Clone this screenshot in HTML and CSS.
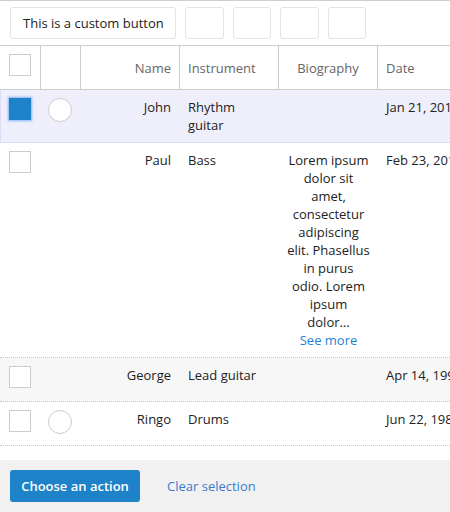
FILE: index.html
```html
<!DOCTYPE html>
<html lang="en">
<head>
<meta charset="utf-8">
<title>Table</title>
<link rel="stylesheet" href="styles.css">
</head>
<body>
<div class="page">
  <div class="toolbar">
    <button class="tbtn tbtn-text">This is a custom button</button>
    <button class="tbtn tbtn-empty"></button>
    <button class="tbtn tbtn-empty"></button>
    <button class="tbtn tbtn-empty"></button>
    <button class="tbtn tbtn-empty"></button>
  </div>

  <div class="grid">
    <div class="row head">
      <div class="hc hc-check"><span class="box"></span></div>
      <div class="hc"></div>
      <div class="hc right">Name</div>
      <div class="hc">Instrument</div>
      <div class="hc center">Biography</div>
      <div class="hc">Date</div>
    </div>

    <div class="row body selected">
      <div class="c c-check"><span class="box checked"></span></div>
      <div class="c c-radio"><span class="radio"></span></div>
      <div class="c right">John</div>
      <div class="c">Rhythm guitar</div>
      <div class="c center"></div>
      <div class="c nowrap">Jan 21, 2018</div>
    </div>

    <div class="row body dotted">
      <div class="c c-check"><span class="box"></span></div>
      <div class="c c-radio"></div>
      <div class="c right">Paul</div>
      <div class="c">Bass</div>
      <div class="c center bio">Lorem ipsum dolor sit amet, consectetur adipiscing elit. Phasellus in purus odio. Lorem ipsum dolor…<a class="more" href="#">See more</a></div>
      <div class="c nowrap">Feb 23, 2017</div>
    </div>

    <div class="row body dotted grey">
      <div class="c c-check"><span class="box"></span></div>
      <div class="c c-radio"></div>
      <div class="c right">George</div>
      <div class="c">Lead guitar</div>
      <div class="c center"></div>
      <div class="c nowrap">Apr 14, 1990</div>
    </div>

    <div class="row body dotted">
      <div class="c c-check"><span class="box"></span></div>
      <div class="c c-radio"><span class="radio"></span></div>
      <div class="c right">Ringo</div>
      <div class="c">Drums</div>
      <div class="c center"></div>
      <div class="c nowrap">Jun 22, 1985</div>
    </div>
  </div>

  <div class="footer">
    <button class="action">Choose an action</button>
    <a class="clear" href="#">Clear selection</a>
  </div>
</div>
</body>
</html>
```

FILE: styles.css
```css
html, body {
  margin: 0;
  padding: 0;
  overflow: hidden;
  background: #fff;
}

body {
  font-family: "Open Sans", "DejaVu Sans", sans-serif;
  font-size: 13px;
  line-height: 18px;
  color: #222;
}

.page {
  width: 450px;
  border-top: 1px solid #cfcfcf;
}

.toolbar {
  display: flex;
  gap: 9px;
  padding: 6px 10px 6px 10px;
}

.tbtn {
  box-sizing: border-box;
  height: 32px;
  border: 1px solid #e3e3e3;
  border-radius: 3px;
  background: #fff;
  font-family: inherit;
  font-size: 13px;
  color: #222;
  margin: 0;
  flex: none;
}

.tbtn-text {
  width: 166px;
  padding: 0 12px;
  text-align: left;
  white-space: nowrap;
}

.tbtn-empty {
  width: 38.5px;
  padding: 0;
}

.grid {
  width: 520px;
}

.row {
  display: grid;
  grid-template-columns: 40px 40px 99px 99px 99px 143px;
  box-sizing: border-box;
}

.head {
  height: 45px;
  border-top: 1px solid #cccccc;
  border-bottom: 1px solid #cccccc;
  color: #666;
}

.hc {
  border-left: 1px solid #cccccc;
  padding: 0 8px;
  display: flex;
  align-items: center;
  white-space: nowrap;
}

.hc-check {
  border-left: none;
  padding: 8px 0 0 9px;
  align-items: flex-start;
}

.hc.right { justify-content: flex-end; }
.hc.center { justify-content: center; }

.body {
  min-height: 44px;
  align-items: start;
}

.c {
  border-left: 1px solid transparent;
  padding: 8px 7px 8px 8px;
}

.c.right { text-align: right; padding-right: 8px; }
.c.center { text-align: center; }
.c.nowrap { white-space: nowrap; }

.c-check {
  border-left: none;
  padding: 8px 0 0 9px;
  line-height: 0;
}

.c-radio {
  border-left: none;
  padding: 8px 0 0 8px;
  line-height: 0;
}

.selected {
  background: #efeffb;
  border-bottom: 1px solid #dcdcf4;
  box-shadow: inset 1px 0 0 #dcdcf4;
}

.dotted {
  border-bottom: 1px dotted #c4c4c4;
}

.grey {
  background: #f7f7f7;
}

.box {
  display: inline-block;
  box-sizing: border-box;
  width: 22px;
  height: 22px;
  border: 1px solid #cccccc;
  background: #fff;
}

.box.checked {
  background: #1e82c8;
  border-color: #1e82c8;
  box-shadow: 0 0 2px 1px rgba(40, 130, 240, 0.55);
}

.radio {
  display: inline-block;
  box-sizing: border-box;
  width: 24px;
  height: 24px;
  border: 1px solid #cccccc;
  border-radius: 50%;
  background: #fff;
}

.more {
  display: block;
  color: #1f7fd3;
  text-decoration: none;
}

.footer {
  margin-top: 14px;
  background: #f1f1f1;
  padding: 10px 10px;
  display: flex;
  align-items: center;
  gap: 27px;
}

.action {
  box-sizing: border-box;
  width: 130px;
  height: 32px;
  margin: 0;
  padding: 0;
  border: none;
  border-radius: 3px;
  background: #1e82c8;
  color: #fff;
  font-family: inherit;
  font-size: 13px;
  font-weight: 600;
}

.clear {
  color: #3b7bcf;
  text-decoration: none;
  font-size: 13px;
}
```
